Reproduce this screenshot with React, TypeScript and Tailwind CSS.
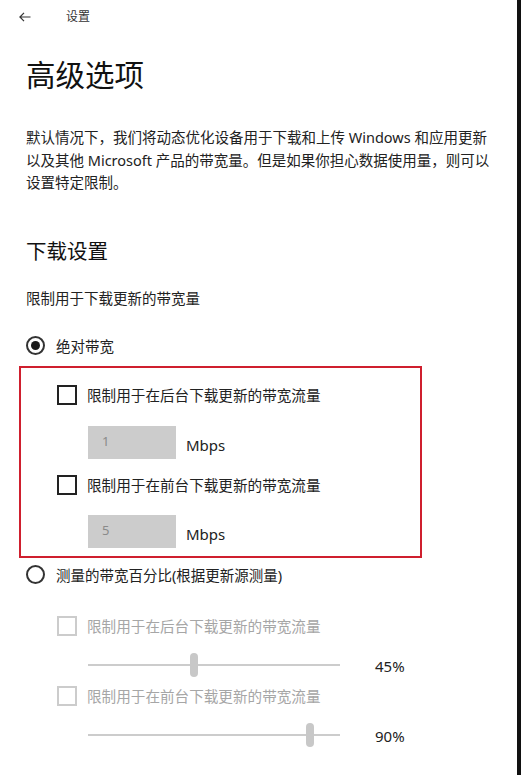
import React from 'react';

const font = { fontFamily: '"Noto Sans", "Noto Sans CJK SC", sans-serif' };

function Checkbox({ label, disabled = false }: { label: string; disabled?: boolean }) {
  return (
    <div className="flex items-center h-[20px]">
      <div
        className={`w-[20px] h-[20px] border-2 ${disabled ? 'border-[#cccccc]' : 'border-[#222222]'}`}
      />
      <span className={`ml-[10px] text-[14.6px] leading-[20px] whitespace-nowrap ${disabled ? 'text-[#a6a6a6]' : 'text-[#222222]'}`}>
        {label}
      </span>
    </div>
  );
}

function Radio({ label, checked = false }: { label: string; checked?: boolean }) {
  return (
    <div className="flex items-center h-[20px]">
      <div className="w-[19px] h-[19px] rounded-full border-2 border-[#333333] flex items-center justify-center">
        {checked && <div className="w-[9px] h-[9px] rounded-full bg-[#1a1a1a]" />}
      </div>
      <span className="ml-[11px] text-[14.5px] leading-[20px] text-[#222222] whitespace-nowrap">{label}</span>
    </div>
  );
}

function NumberBox({ value }: { value: string }) {
  return (
    <div className="flex items-center ml-[31px]">
      <div className="w-[88px] h-[33px] bg-[#cccccc] flex items-center pl-[14px] text-[13px] text-[#8a8a8a]">
        {value}
      </div>
      <span className="ml-[10px] pt-[6px] text-[15px] text-[#222222]">Mbps</span>
    </div>
  );
}

function Slider({ pct, label }: { pct: number; label: string }) {
  return (
    <div className="flex items-center h-[24px] ml-[62px]">
      <div className="relative w-[252px] h-[24px] flex items-center">
        <div className="w-full h-[2px] bg-[#cccccc]" />
        <div
          className="absolute top-0 w-[8px] h-[24px] rounded-full bg-[#c8c8c8]"
          style={{ left: `calc(${pct}% - 4px)` }}
        />
      </div>
      <span className="ml-[35px] pt-[4px] text-[15px] text-[#222222]">{label}</span>
    </div>
  );
}

export default function App() {
  return (
    <div className="flex w-[521px] h-[775px] bg-white overflow-hidden" style={font}>
      <div className="flex-1 flex flex-col pl-[26px]">
        {/* Header */}
        <div className="flex items-center h-[34px] -ml-[7px]">
          <svg width="12" height="10" viewBox="0 0 12 10" fill="none" stroke="#333" strokeWidth="1.2">
            <path d="M11.5 5H1M5 0.8L0.9 5L5 9.2" />
          </svg>
          <span className="ml-[35px] text-[12px] text-[#333333]">设置</span>
        </div>

        <h1 className="mt-[21px] text-[29.5px] leading-[40px] text-[#111111] font-normal">高级选项</h1>

        <p className="mt-[31px] text-[14.5px] leading-[22.5px] text-[#222222] whitespace-nowrap">
          默认情况下，我们将动态优化设备用于下载和上传 Windows 和应用更新
          <br />
          以及其他 Microsoft 产品的带宽量。但是如果你担心数据使用量，则可以
          <br />
          设置特定限制。
        </p>

        <h2 className="mt-[43px] text-[20.5px] leading-[28px] text-[#111111] font-normal">下载设置</h2>

        <div className="mt-[23px] text-[14.5px] leading-[20px] text-[#222222]">限制用于下载更新的带宽量</div>

        <div className="mt-[28px]">
          <Radio label="绝对带宽" checked />
        </div>

        {/* Highlighted box */}
        <div className="mt-[10px] -ml-[7px] w-[403px] border-2 border-[#cf1f2e] pt-[17px] pb-[8px] pl-[36px]">
          <Checkbox label="限制用于在后台下载更新的带宽流量" />
          <div className="mt-[21px]">
            <NumberBox value="1" />
          </div>
          <div className="mt-[16px]">
            <Checkbox label="限制用于在前台下载更新的带宽流量" />
          </div>
          <div className="mt-[20px]">
            <NumberBox value="5" />
          </div>
        </div>

        <div className="mt-[7px]">
          <Radio label="测量的带宽百分比(根据更新源测量)" />
        </div>

        <div className="mt-[31px] ml-[31px]">
          <Checkbox label="限制用于在后台下载更新的带宽流量" disabled />
        </div>
        <div className="mt-[17px]">
          <Slider pct={42} label="45%" />
        </div>
        <div className="mt-[9px] ml-[31px]">
          <Checkbox label="限制用于在前台下载更新的带宽流量" disabled />
        </div>
        <div className="mt-[17px]">
          <Slider pct={88} label="90%" />
        </div>
      </div>
      <div className="w-[4px] bg-[#111111]" />
    </div>
  );
}
